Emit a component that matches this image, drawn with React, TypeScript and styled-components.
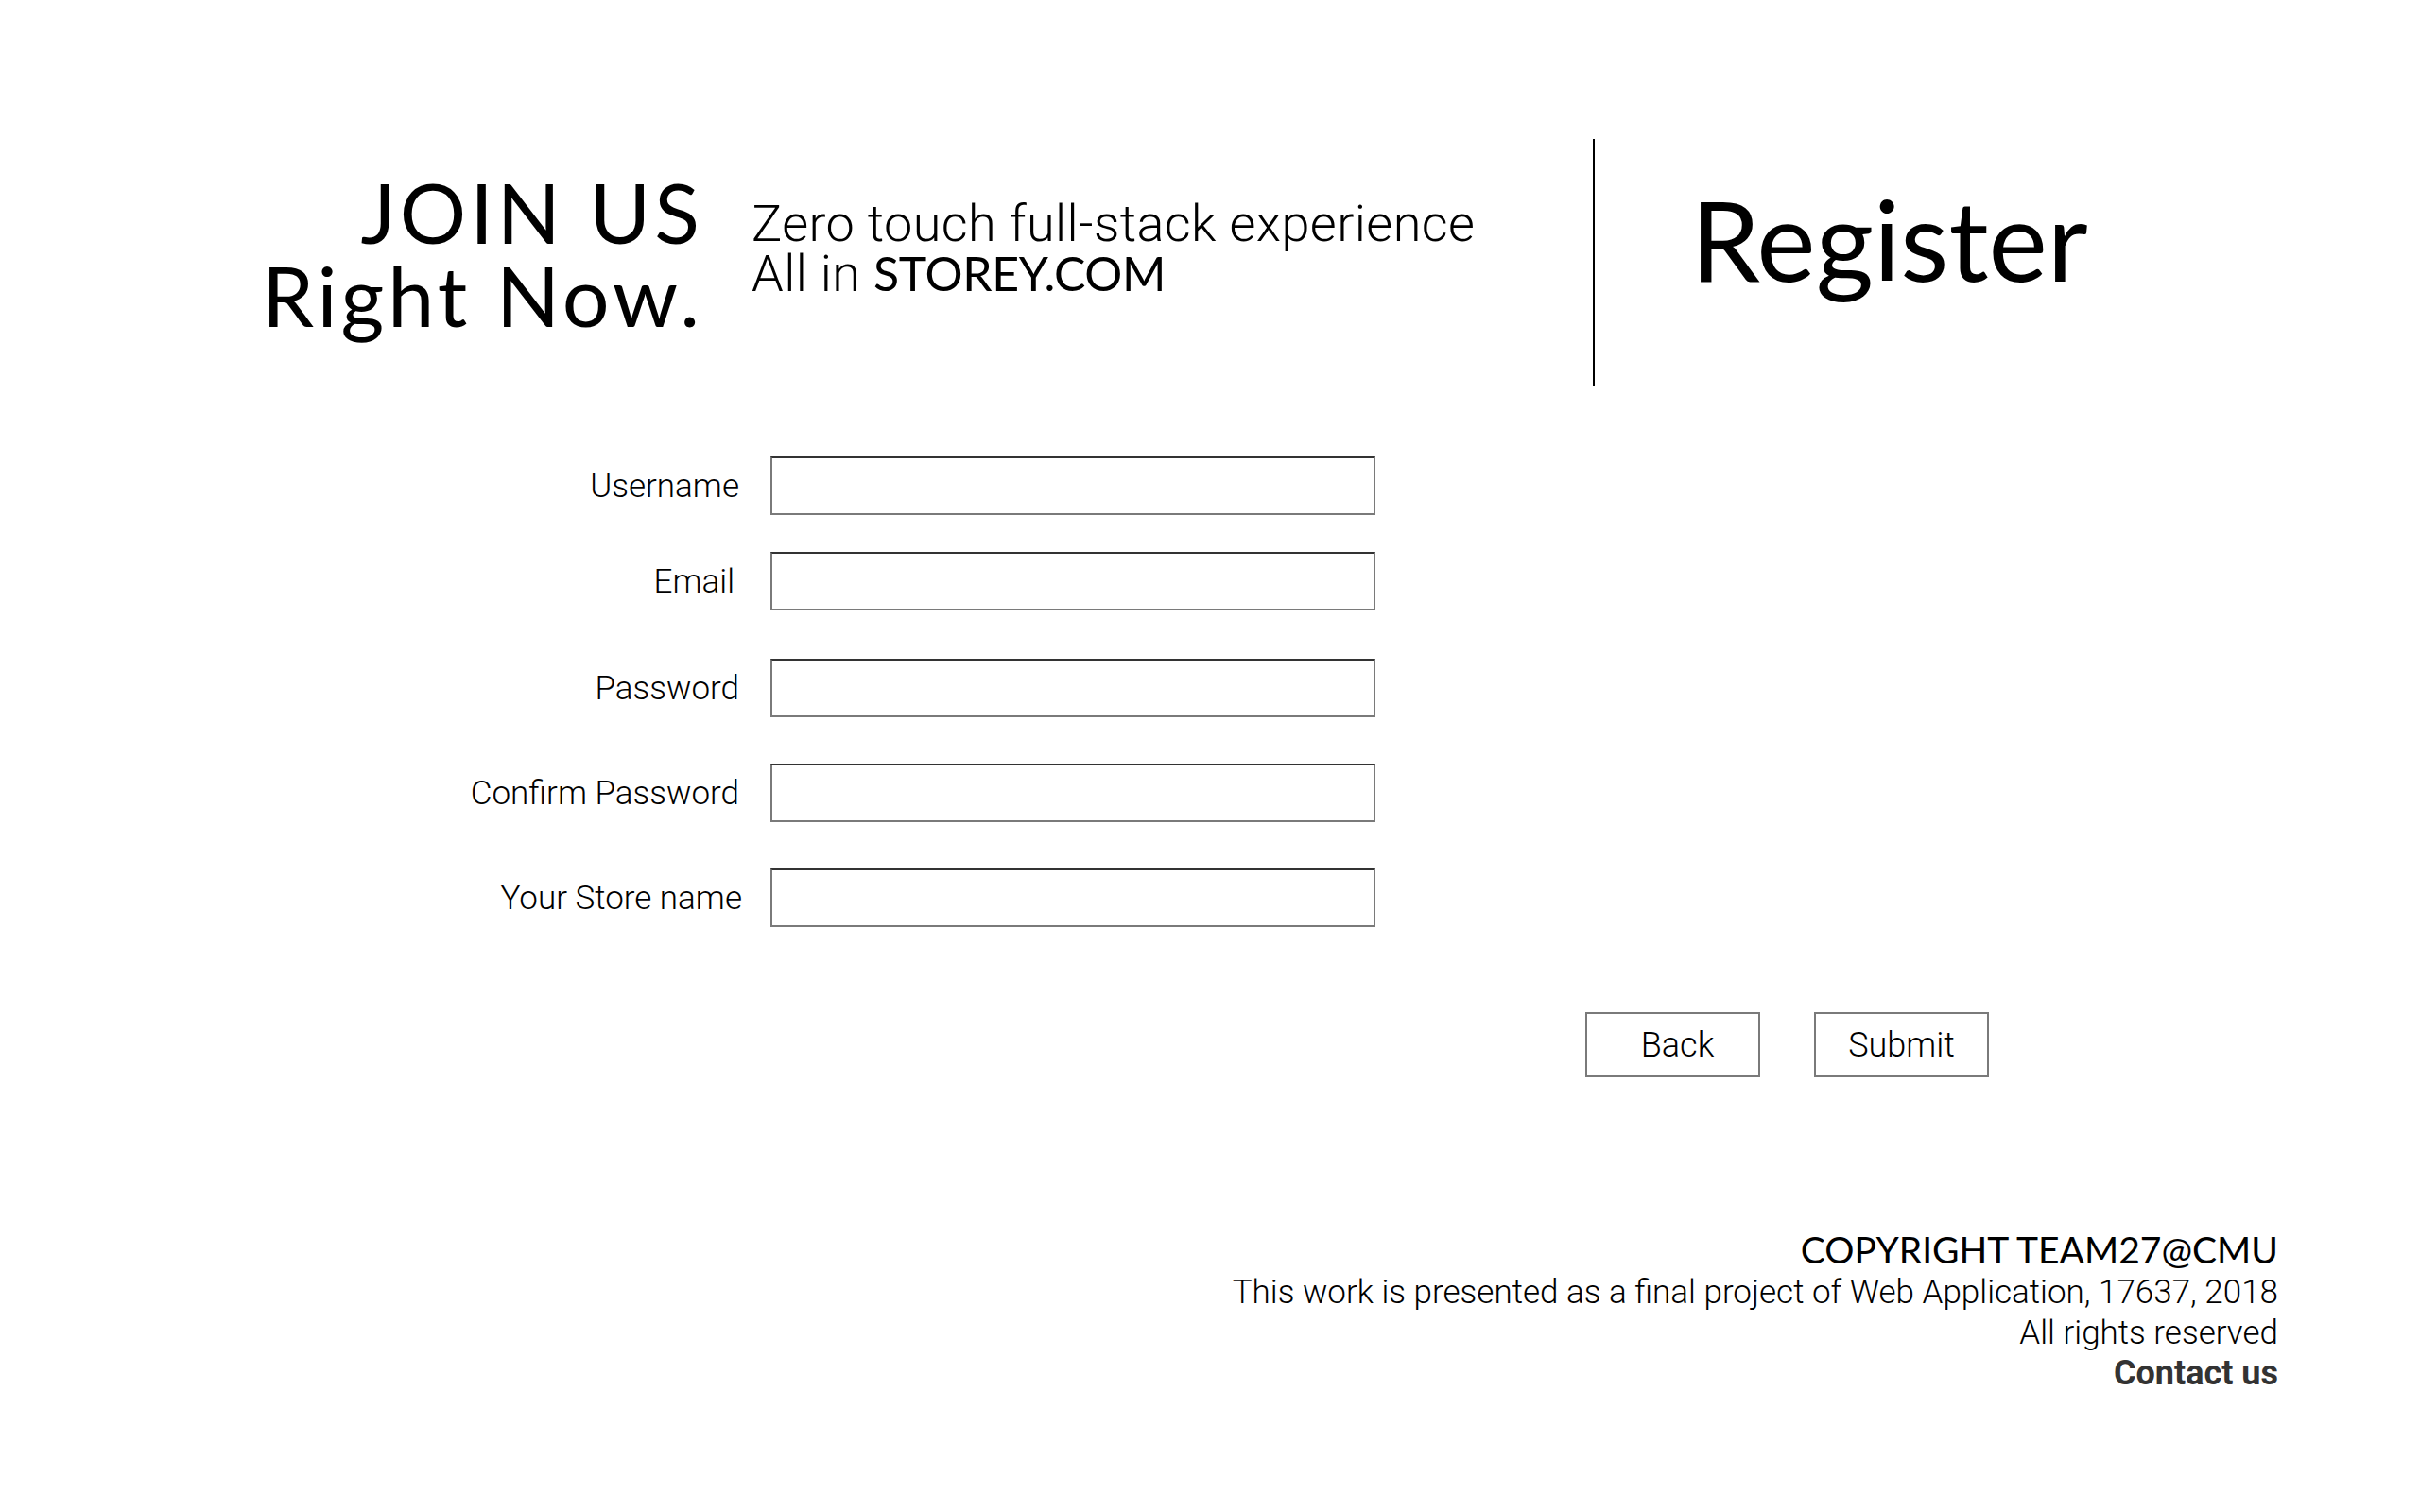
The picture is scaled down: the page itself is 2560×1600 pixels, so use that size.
import React from "react";
import styled, { createGlobalStyle } from "styled-components";

const GlobalStyle = createGlobalStyle`
  html, body { margin: 0; padding: 0; background: #ffffff; }
  body { font-family: "Roboto", "Liberation Sans", sans-serif; color: #000; }
  * { box-sizing: border-box; }
`;

const Page = styled.div`
  width: 2560px;
  min-height: 1600px;
  background: #fff;
  display: flex;
  flex-direction: column;
`;

const Header = styled.header`
  display: flex;
  align-items: flex-start;
  padding-top: 147px;
`;

const HeroTitle = styled.h1`
  width: 744px;
  margin: 33px 0 0 0;
  font-family: "Lato", "Noto Sans", sans-serif;
  font-weight: 400;
  font-size: 88px;
  line-height: 88px;
  text-align: right;
  letter-spacing: 4px;
`;

const Tagline = styled.p`
  width: 890px;
  margin: 63px 0 0 51px;
  font-family: "Roboto", "Liberation Sans", sans-serif;
  font-weight: 300;
  font-size: 54px;
  line-height: 53px;
  letter-spacing: 0.4px;
`;

const Brand = styled.span`
  font-family: "Lato", "Noto Sans", sans-serif;
  font-weight: 400;
  font-size: 50px;
  letter-spacing: -0.3px;
`;

const RegisterPanel = styled.div`
  width: 625px;
  height: 261px;
  border-left: 2px solid #000;
  display: flex;
  justify-content: center;
  align-items: flex-start;
`;

const RegisterTitle = styled.h2`
  margin: 47px 0 0 0;
  font-family: "Lato", "Noto Sans", sans-serif;
  font-weight: 400;
  font-size: 118px;
  line-height: 1;
`;

const Form = styled.form`
  display: flex;
  flex-direction: column;
  margin-top: 75px;
`;

const Row = styled.div<{ $gap: number }>`
  display: grid;
  grid-template-columns: 782px 640px;
  column-gap: 33px;
  align-items: center;
  margin-top: ${(p) => p.$gap}px;
`;

const Label = styled.label<{ $shift: number }>`
  text-align: right;
  font-family: "Roboto", "Liberation Sans", sans-serif;
  font-weight: 300;
  font-size: 35px;
  padding-right: ${(p) => Math.max(0, p.$shift)}px;
  margin-right: ${(p) => Math.min(0, p.$shift)}px;
`;

const Input = styled.input`
  width: 640px;
  height: 62px;
  border: 2px solid #7a7a7a;
  border-top-color: #333;
  background: #fff;
  padding: 0 12px;
  font-size: 30px;
  outline: none;
`;

const Actions = styled.div`
  display: flex;
  gap: 57px;
  padding-left: 1677px;
  margin-top: 90px;
`;

const Button = styled.button<{ $nudge?: number }>`
  width: 185px;
  height: 69px;
  border: 2px solid #7a7a7a;
  background: #fff;
  font-family: "Roboto", "Liberation Sans", sans-serif;
  font-weight: 300;
  font-size: 36px;
  color: #000;
  padding: 0 0 0 ${(p) => p.$nudge ?? 0}px;
`;

const Footer = styled.footer`
  display: flex;
  flex-direction: column;
  align-items: flex-end;
  padding-right: 150px;
  margin-top: 158px;
  font-family: "Roboto", "Liberation Sans", sans-serif;
  font-weight: 300;
  font-size: 35px;
  line-height: 43px;
`;

const Copyright = styled.div`
  font-family: "Lato", "Noto Sans", sans-serif;
  font-weight: 400;
  font-size: 39px;
  line-height: 48px;
`;

const FooterLine = styled.div<{ $bold?: boolean }>`
  font-weight: ${(p) => (p.$bold ? 700 : 300)};
  font-size: ${(p) => (p.$bold ? 36 : 35)}px;
  color: ${(p) => (p.$bold ? "#333" : "#000")};
`;

const fields = [
  { label: "Username", type: "text", gap: 0, shift: 0 },
  { label: "Email", type: "email", gap: 39, shift: 5 },
  { label: "Password", type: "password", gap: 51, shift: 0 },
  { label: "Confirm Password", type: "password", gap: 49, shift: 0 },
  { label: "Your Store name", type: "text", gap: 49, shift: -3 },
];

export default function App() {
  return (
    <Page>
      <GlobalStyle />
      <Header>
        <HeroTitle>
          JOIN US
          <br />
          Right Now.
        </HeroTitle>
        <Tagline>
          Zero touch full-stack experience
          <br />
          All in <Brand>STOREY.COM</Brand>
        </Tagline>
        <RegisterPanel>
          <RegisterTitle>Register</RegisterTitle>
        </RegisterPanel>
      </Header>
      <Form onSubmit={(e) => e.preventDefault()}>
        {fields.map((f) => (
          <Row key={f.label} $gap={f.gap}>
            <Label $shift={f.shift}>{f.label}</Label>
            <Input type={f.type} />
          </Row>
        ))}
      </Form>
      <Actions>
        <Button type="button" $nudge={10}>
          Back
        </Button>
        <Button type="button">Submit</Button>
      </Actions>
      <Footer>
        <Copyright>COPYRIGHT TEAM27@CMU</Copyright>
        <FooterLine>This work is presented as a final project of Web Application, 17637, 2018</FooterLine>
        <FooterLine>All rights reserved</FooterLine>
        <FooterLine $bold>Contact us</FooterLine>
      </Footer>
    </Page>
  );
}
